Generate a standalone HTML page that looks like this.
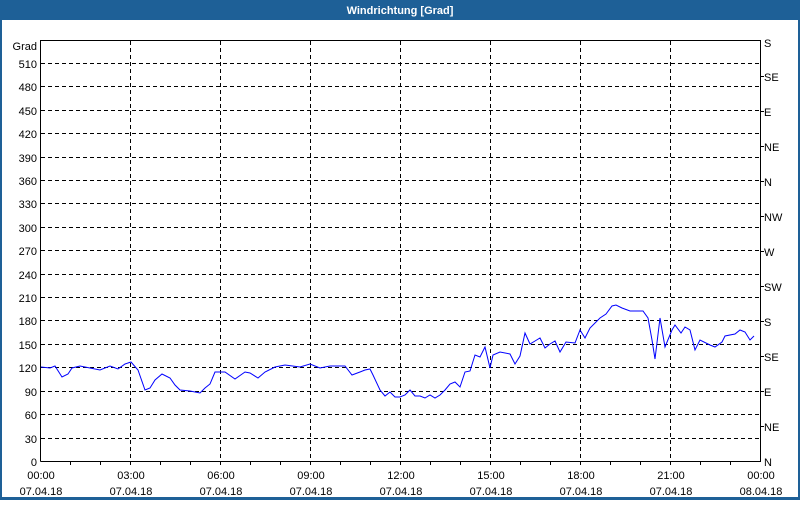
<!DOCTYPE html>
<html><head><style>
body{margin:0;width:800px;height:500px;overflow:hidden;background:#fff;font-family:"Liberation Sans",sans-serif}
</style></head><body>
<svg width="800" height="500" xmlns="http://www.w3.org/2000/svg" font-family="Liberation Sans, sans-serif" font-size="11">
<rect x="0" y="0" width="800" height="500" fill="#1e6097"/>
<rect x="2" y="20" width="796" height="477" fill="#fff"/>
<text x="400" y="14" fill="#fff" font-weight="bold" text-anchor="middle" font-size="11">Windrichtung [Grad]</text>
<g stroke="#000" stroke-dasharray="4,3" stroke-width="1">
<line x1="41" x2="760" y1="63.5" y2="63.5"/><line x1="41" x2="760" y1="86.5" y2="86.5"/><line x1="41" x2="760" y1="110.5" y2="110.5"/><line x1="41" x2="760" y1="133.5" y2="133.5"/><line x1="41" x2="760" y1="157.5" y2="157.5"/><line x1="41" x2="760" y1="180.5" y2="180.5"/><line x1="41" x2="760" y1="203.5" y2="203.5"/><line x1="41" x2="760" y1="227.5" y2="227.5"/><line x1="41" x2="760" y1="250.5" y2="250.5"/><line x1="41" x2="760" y1="274.5" y2="274.5"/><line x1="41" x2="760" y1="297.5" y2="297.5"/><line x1="41" x2="760" y1="320.5" y2="320.5"/><line x1="41" x2="760" y1="344.5" y2="344.5"/><line x1="41" x2="760" y1="367.5" y2="367.5"/><line x1="41" x2="760" y1="391.5" y2="391.5"/><line x1="41" x2="760" y1="414.5" y2="414.5"/><line x1="41" x2="760" y1="438.5" y2="438.5"/>
<line y1="41" y2="461" x1="130.5" x2="130.5"/><line y1="41" y2="461" x1="220.5" x2="220.5"/><line y1="41" y2="461" x1="310.5" x2="310.5"/><line y1="41" y2="461" x1="400.5" x2="400.5"/><line y1="41" y2="461" x1="490.5" x2="490.5"/><line y1="41" y2="461" x1="580.5" x2="580.5"/><line y1="41" y2="461" x1="670.5" x2="670.5"/>
</g>
<polyline fill="none" stroke="#000" stroke-width="1" points="40.5,461.5 40.5,40.5 760.5,40.5 760.5,461.5 40.5,461.5"/>
<g stroke="#000">
<path d="M70.5,461v4M100.5,461v4M130.5,461v4M160.5,461v4M190.5,461v4M220.5,461v4M250.5,461v4M280.5,461v4M310.5,461v4M340.5,461v4M370.5,461v4M400.5,461v4M430.5,461v4M460.5,461v4M490.5,461v4M520.5,461v4M550.5,461v4M580.5,461v4M610.5,461v4M640.5,461v4M670.5,461v4M700.5,461v4M730.5,461v4"/>
<path d="M760,76.5h4M760,111.5h4M760,146.5h4M760,181.5h4M760,216.5h4M760,251.5h4M760,286.5h4M760,321.5h4M760,356.5h4M760,391.5h4M760,426.5h4"/>
</g>
<g text-anchor="end" fill="#000">
<text x="37" y="50">Grad</text><text x="37" y="68">510</text><text x="37" y="91">480</text><text x="37" y="115">450</text><text x="37" y="138">420</text><text x="37" y="162">390</text><text x="37" y="185">360</text><text x="37" y="208">330</text><text x="37" y="232">300</text><text x="37" y="255">270</text><text x="37" y="279">240</text><text x="37" y="302">210</text><text x="37" y="325">180</text><text x="37" y="349">150</text><text x="37" y="372">120</text><text x="37" y="396">90</text><text x="37" y="419">60</text><text x="37" y="443">30</text><text x="37" y="466">0</text>
</g>
<g fill="#000">
<text x="764" y="47">S</text><text x="764" y="81">SE</text><text x="764" y="116">E</text><text x="764" y="151">NE</text><text x="764" y="186">N</text><text x="764" y="221">NW</text><text x="764" y="256">W</text><text x="764" y="291">SW</text><text x="764" y="326">S</text><text x="764" y="361">SE</text><text x="764" y="396">E</text><text x="764" y="431">NE</text><text x="764" y="466">N</text>
</g>
<g text-anchor="middle" fill="#000">
<text x="41" y="479">00:00</text><text x="41" y="495">07.04.18</text>
<text x="131" y="479">03:00</text><text x="131" y="495">07.04.18</text>
<text x="221" y="479">06:00</text><text x="221" y="495">07.04.18</text>
<text x="311" y="479">09:00</text><text x="311" y="495">07.04.18</text>
<text x="401" y="479">12:00</text><text x="401" y="495">07.04.18</text>
<text x="491" y="479">15:00</text><text x="491" y="495">07.04.18</text>
<text x="581" y="479">18:00</text><text x="581" y="495">07.04.18</text>
<text x="671" y="479">21:00</text><text x="671" y="495">07.04.18</text>
<text x="761" y="479">00:00</text><text x="761" y="495">08.04.18</text>
</g>
<polyline fill="none" stroke="#0000ff" stroke-width="1" points="41,367 50,368 55,366 62,377 68,374 72,368 80,366 90,368 100,370 110,366 118,369 125,364 131,362 138,370 145,390 150,388 155,380 162,374 170,378 175,385 180,390 190,391 200,393 205,388 210,384 215,372 225,372 235,379 245,372 250,373 258,378 265,372 275,367 285,365 300,367 310,364 320,368 330,366 345,366 352,375 360,372 365,370 370,369 373,375 380,390 385,396 390,392 395,397 400,397 405,395 410,390 415,396 420,396 425,398 430,395 435,398 440,395 445,390 450,384 455,382 460,387 465,372 470,371 475,355 480,357 485,347 490,368 493,355 500,352 510,354 515,364 520,356 525,333 530,344 535,341 540,338 545,348 550,344 555,341 560,352 566,342 575,343 580,330 585,338 590,328 600,318 606,314 612,306 616,305 622,308 630,311 643,311 648,318 652,340 655,359 660,318 665,347 672,330 675,325 681,333 685,327 690,330 695,350 700,340 710,345 715,347 722,342 725,336 735,334 740,330 745,332 750,340 754,336"/>
</svg>
</body></html>
